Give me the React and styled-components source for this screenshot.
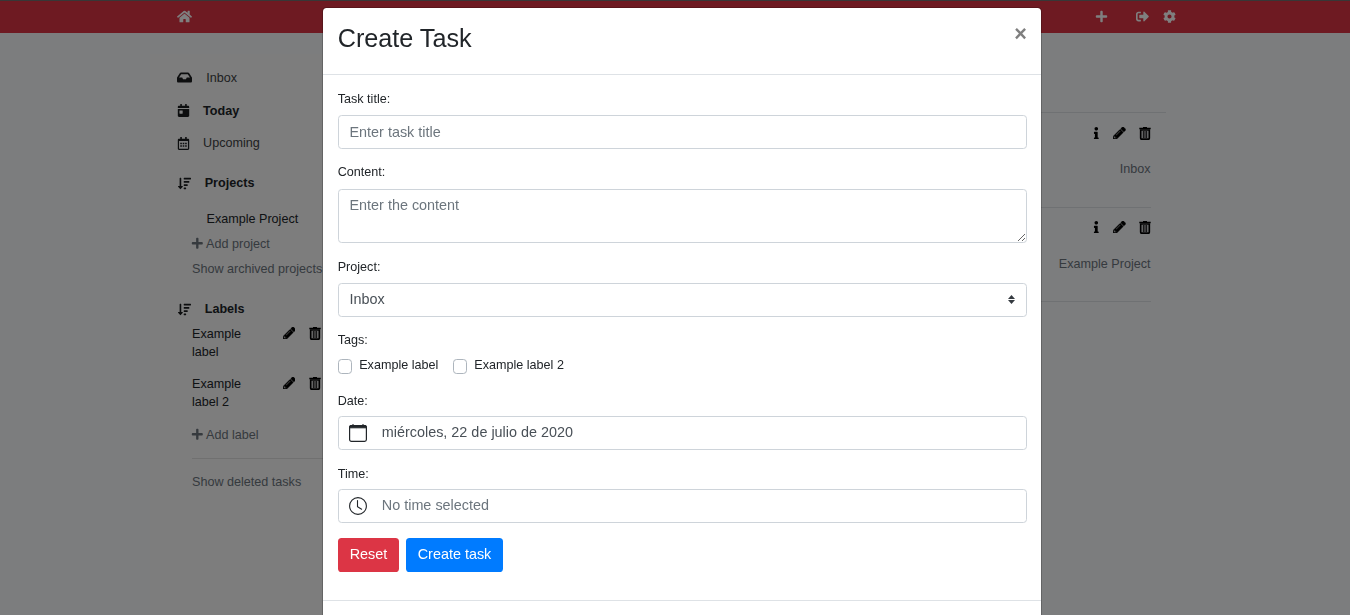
import React from "react";
import styled, { createGlobalStyle } from "styled-components";
import {
  FaHome, FaInbox, FaCalendarDay, FaRegCalendarAlt, FaSortAmountDown, FaPlus,
  FaPencilAlt, FaInfo, FaSignOutAlt, FaCog,
} from "react-icons/fa";

const Global = createGlobalStyle`
  *, *::before, *::after { box-sizing: border-box; }
  html, body { margin: 0; height: 100%; overflow: hidden; }
  body {
    font: 12.6px/18px "Liberation Sans", Arial, sans-serif;
    color: #212529;
    background: #f8fafc;
  }
  svg { display: block; flex: none; }
`;

const Page = styled.div`
  height: 615px;
  overflow: hidden;
`;

const Navbar = styled.header`
  height: 33px;
  padding: 0 174px 2px 177px;
  display: flex;
  align-items: center;
  border-top: 1px solid #6f6f6f;
  background: #dc3545;
  color: #fff;
  font-size: 13px;
`;

const NavActions = styled.nav`
  margin-left: auto;
  display: flex;
  align-items: center;
  gap: 14px;
  svg:first-child { margin-right: 14px; }
`;

const Columns = styled.div`
  display: flex;
  padding: 21px 184px 0 150px;
`;

const Sidebar = styled.aside`
  width: 240px;
  height: 561px;
  padding: 15px 0 0 27px;
  background: #fafafa;
`;

const NavItem = styled.a`
  display: flex;
  align-items: center;
  height: ${(p) => p.$height}px;
  font-weight: ${(p) => (p.$bold ? 700 : 400)};
  color: ${(p) => (p.$bold ? "#212529" : "#404244")};
  svg { margin-right: ${(p) => p.$gap}px; color: #1a1c1e; }
`;

const SubLink = styled.a`
  display: flex;
  align-items: center;
  gap: 2.4px;
  height: 25px;
  padding-left: ${(p) => p.$indent || 15}px;
  color: ${(p) => (p.$muted ? "#6c757d" : "#212529")};
  white-space: nowrap;
  svg { margin-left: -0.9px; }
`;

const SubList = styled.div`
  padding: ${(p) => p.$pad};
`;

const SortIcon = styled(FaSortAmountDown)`
  margin-left: 0.6px;
`;

const IconGroup = styled.span`
  display: flex;
  align-items: center;
  gap: 13.5px;
  height: 18px;
  color: #000;
`;

const LabelRow = styled.div`
  display: flex;
  align-items: flex-start;
  padding-left: 15px;
  height: 50px;
  ${IconGroup} { height: 16px; }
`;

const Labels = styled.div`
  height: 97px;
`;

const LabelName = styled.span`
  width: 90.5px;
  padding-right: 30px;
`;

const InfoIcon = styled(FaInfo)`
  margin-right: -3px;
`;

const PencilIcon = styled(FaPencilAlt)`
  stroke: currentColor;
  stroke-width: 18px;
`;

const Rule = styled.hr`
  margin: 11px 0 10px 15px;
  border: 0;
  border-top: 1px solid rgba(0, 0, 0, 0.1);
`;

const Main = styled.main`
  flex: 1;
  padding-top: 58px;
`;

const TaskList = styled.div`
  border-top: 1px solid #dee2e6;
  padding-right: 15px;
`;

const Task = styled.article`
  height: ${(p) => p.$height}px;
  padding-top: ${(p) => p.$top}px;
  display: flex;
  flex-direction: column;
  align-items: flex-end;
  gap: ${(p) => p.$gap}px;
  border-bottom: 1px solid #dee2e6;
  color: #6c757d;
`;

const ProjectName = styled.span`
  padding-right: 0.5px;
`;

const Backdrop = styled.div`
  position: fixed;
  inset: 0;
  display: flex;
  justify-content: center;
  align-items: flex-start;
  padding: 7px 0 0 14px;
  background: rgba(0, 0, 0, 0.5);
`;

const Dialog = styled.section`
  width: 720px;
  height: 680px;
  border: 1px solid rgba(0, 0, 0, 0.2);
  border-radius: 4.5px;
  background: #fff;
  background-clip: padding-box;
`;

const DialogHeader = styled.div`
  display: flex;
  justify-content: space-between;
  height: 67px;
  padding: 11px 14.2px 0 14.7px;
  border-bottom: 1px solid #dee2e6;
`;

const Title = styled.h2`
  margin: 0;
  font-size: 25.2px;
  line-height: 38px;
  font-weight: 400;
`;

const CloseButton = styled.button`
  height: 30px;
  padding: 0;
  border: 0;
  background: none;
  color: #7f7f7f;
  font: 700 21.6px/28px "Liberation Sans", Arial, sans-serif;
`;

const Form = styled.form`
  height: 526px;
  padding: 15px 14px 0 15px;
  border-bottom: 1px solid #dee2e6;
`;

const Field = styled.div`
  margin-bottom: ${(p) => p.$mb ?? 15}px;
`;

const FieldLabel = styled.label`
  display: block;
  height: ${(p) => p.$height || 25}px;
  margin-left: -0.3px;
`;

const control = `
  display: block;
  width: 100%;
  border: 1px solid #ced4da;
  border-radius: 3.6px;
  background: #fff;
  color: #495057;
  font: 14.4px/21.6px "Liberation Sans", Arial, sans-serif;
  outline: none;
`;

const Input = styled.input`
  ${control}
  height: 34px;
  padding: 5px 10.5px;
  &::placeholder { color: #6c757d; opacity: 1; }
`;

const TextArea = styled.textarea`
  ${control}
  height: 54px;
  padding: 5px 10.5px;
  resize: vertical;
  &::placeholder { color: #6c757d; opacity: 1; }
`;

const Picker = styled.div`
  ${control}
  display: flex;
  align-items: center;
  height: 34px;
  padding: 0 11px 0 ${(p) => (p.$icon ? 10 : 10.5)}px;
  color: ${(p) => (p.$empty ? "#6c757d" : "#495057")};
`;

const PickerText = styled.span`
  flex: 1;
  line-height: 22px;
  padding: 0 0 2px ${(p) => p.$left || 0}px;
`;

const Checks = styled.div`
  display: flex;
  gap: 15px;
  height: 36px;
`;

const Check = styled.label`
  display: flex;
  gap: 7.2px;
  margin-right: -0.2px;
  line-height: 18px;
`;

const Box = styled.span`
  width: 14px;
  height: 15px;
  margin-top: 3px;
  border: 1px solid #adb5bd;
  border-radius: 3.6px;
`;

const Buttons = styled.div`
  display: flex;
  gap: 7px;
`;

const Button = styled.button`
  width: ${(p) => p.$width}px;
  height: 34px;
  padding: 0 0 2px;
  border: 0;
  border-radius: 3.6px;
  background: ${(p) => p.$color};
  color: #fff;
  font: 14.4px/22px "Liberation Sans", Arial, sans-serif;
`;

const TrashIcon = () => (
  <svg width="12" height="13" viewBox="0 0 12 13" fill="none" stroke="currentColor">
    <path d="M.3 1.600h11.400M4 .7h4" strokeWidth="1.5" />
    <path d="M1.700 3v8.200q0 1 1 1h6.600q1 0 1-1V3z" strokeWidth="1.700" />
    <path d="M4.300 4v7M6 4v7M7.700 4v7" strokeWidth="1" />
  </svg>
);

const CalendarIcon = () => (
  <svg width="18" height="18" viewBox="0 0 18 18" fill="none" stroke="#212529">
    <rect x=".6" y="1.6" width="16.8" height="15.8" rx="1.8" strokeWidth="1.2" />
    <path d="M.6 3.800V3q0-1.500 1.500-1.500h13.800q1.500 0 1.500 1.500v.8z" fill="#212529" />
    <path d="M4 0v2M14 0v2" strokeWidth="1.1" />
  </svg>
);

const ClockIcon = () => (
  <svg width="18" height="18" viewBox="0 0 18 18" fill="none" stroke="#212529" strokeWidth="1.1" strokeLinecap="round">
    <circle cx="9" cy="9" r="8.4" />
    <path d="M8.500 3.600v6l4.100 2.600" />
  </svg>
);

const SelectArrows = () => (
  <svg width="7" height="10" viewBox="0 0 7 10" fill="#343a40">
    <path d="M3.500 0 0 4h7zM3.500 9 0 5h7z" />
  </svg>
);

const Actions = ({ info }) => (
  <IconGroup>
    {info && <InfoIcon size={12.6} />}
    <PencilIcon size={12.6} />
    <TrashIcon />
  </IconGroup>
);

export default function App() {
  return (
    <Page>
      <Global />
      <Navbar>
        <FaHome size={15} />
        <NavActions>
          <FaPlus size={13} />
          <FaSignOutAlt size={13} />
          <FaCog size={13} />
        </NavActions>
      </Navbar>
      <Columns>
        <Sidebar>
          <NavItem $height={17} $gap={14.2}><FaInbox size={15} />Inbox</NavItem>
          <SubList $pad="8px 0 0">
            <NavItem $height={33} $gap={13.1} $bold><FaCalendarDay size={13} />Today</NavItem>
            <NavItem $height={32} $gap={13.1}><FaRegCalendarAlt size={13} />Upcoming</NavItem>
          </SubList>
          <SubList $pad="8px 0 0">
            <NavItem $height={32} $gap={14.1} $bold><SortIcon size={13} />Projects</NavItem>
          </SubList>
          <SubList $pad="7px 0 0">
            <SubLink $indent={29.5}>Example Project</SubLink>
            <SubLink $muted><FaPlus size={12.6} />Add project</SubLink>
            <SubLink $muted>Show archived projects</SubLink>
          </SubList>
          <SubList $pad="12px 0 0">
            <NavItem $height={32} $gap={14.1} $bold><SortIcon size={13} />Labels</NavItem>
          </SubList>
          <Labels>
            <LabelRow><LabelName>Example label</LabelName><Actions /></LabelRow>
            <LabelRow><LabelName>Example label 2</LabelName><Actions /></LabelRow>
          </Labels>
          <SubLink $muted><FaPlus size={12.6} />Add label</SubLink>
          <Rule />
          <SubLink $muted>Show deleted tasks</SubLink>
        </Sidebar>
        <Main>
          <TaskList>
            <Task $height={95} $top={11} $gap={18}>
              <Actions info />
              <ProjectName>Inbox</ProjectName>
            </Task>
            <Task $height={94} $top={10} $gap={19}>
              <Actions info />
              <ProjectName>Example Project</ProjectName>
            </Task>
          </TaskList>
        </Main>
      </Columns>
      <Backdrop>
        <Dialog>
          <DialogHeader>
            <Title>Create Task</Title>
            <CloseButton type="button" aria-label="Close">×</CloseButton>
          </DialogHeader>
          <Form>
            <Field $mb={14}>
              <FieldLabel>Task title:</FieldLabel>
              <Input placeholder="Enter task title" />
            </Field>
            <Field>
              <FieldLabel $height={26}>Content:</FieldLabel>
              <TextArea placeholder="Enter the content" />
            </Field>
            <Field $mb={14}>
              <FieldLabel>Project:</FieldLabel>
              <Picker><PickerText>Inbox</PickerText><SelectArrows /></Picker>
            </Field>
            <Field $mb={0}>
              <FieldLabel>Tags:</FieldLabel>
              <Checks>
                <Check><Box />Example label</Check>
                <Check><Box />Example label 2</Check>
              </Checks>
            </Field>
            <Field>
              <FieldLabel $height={24}>Date:</FieldLabel>
              <Picker $icon><CalendarIcon /><PickerText $left={14.8}>miércoles, 22 de julio de 2020</PickerText></Picker>
            </Field>
            <Field>
              <FieldLabel $height={24}>Time:</FieldLabel>
              <Picker $icon $empty><ClockIcon /><PickerText $left={14.8}>No time selected</PickerText></Picker>
            </Field>
            <Buttons>
              <Button type="button" $width={61} $color="#dc3545">Reset</Button>
              <Button type="button" $width={97} $color="#007bff">Create task</Button>
            </Buttons>
          </Form>
        </Dialog>
      </Backdrop>
    </Page>
  );
}
